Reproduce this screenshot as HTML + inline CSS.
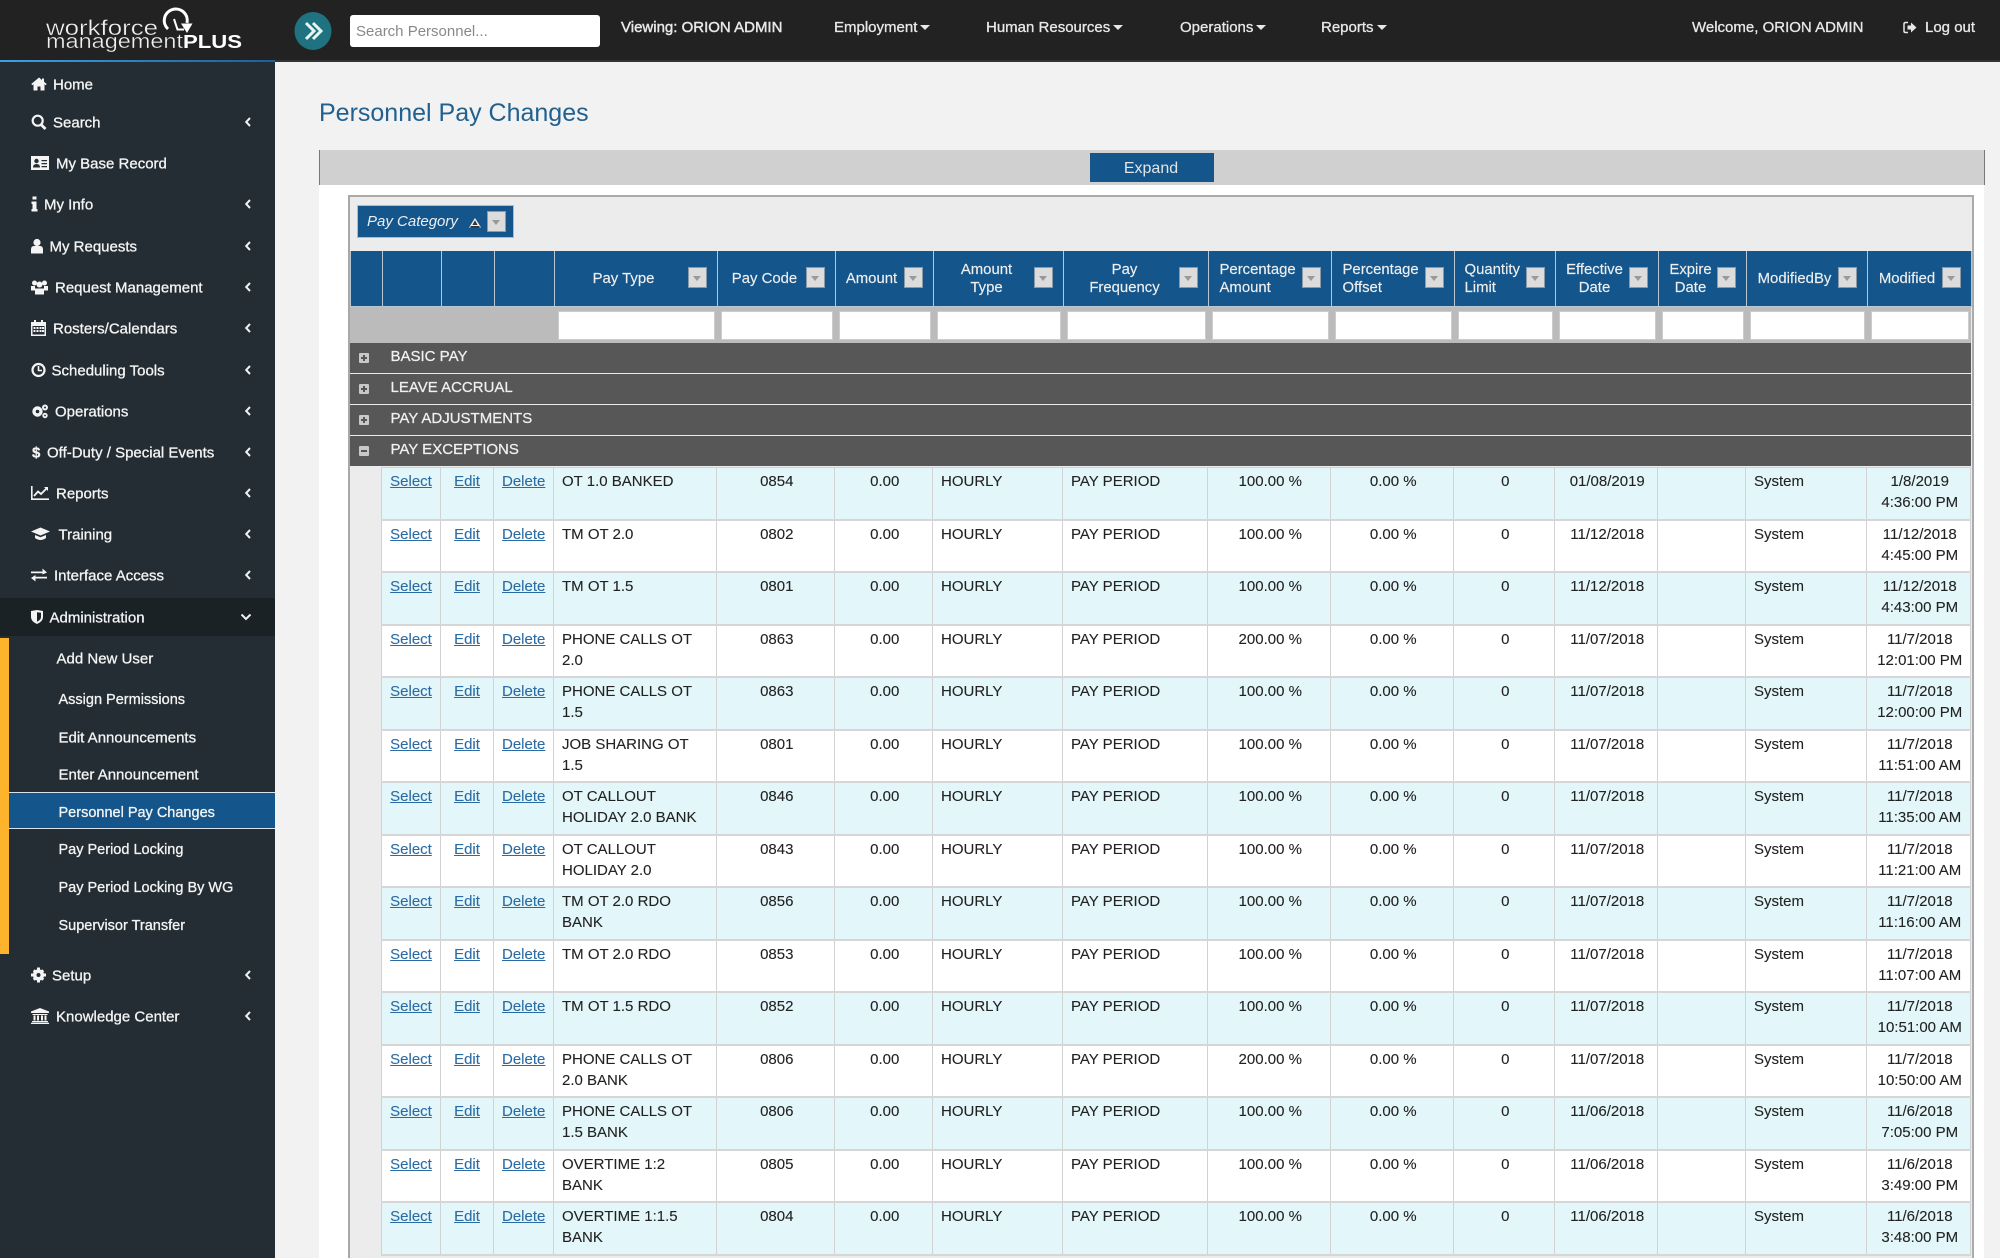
<!DOCTYPE html>
<html lang="en">
<head>
<meta charset="utf-8">
<title>Personnel Pay Changes</title>
<style>
*{box-sizing:border-box}
html{margin:0;padding:0;width:2000px;height:1258px;overflow:hidden;background:#f2f2f2}
body{margin:0;padding:0;width:2000px;height:1258px;overflow:hidden;background:#f2f2f2;font-family:"Liberation Sans",Arial,sans-serif;font-size:15px;color:#222;filter:blur(.35px)}
.abs{position:absolute}
#nav{position:absolute;left:0;top:0;width:2000px;height:62px;background:#222;border-bottom:2px solid #333}
#nav .t{position:absolute;top:18px;line-height:20px;color:#e8e8e8;white-space:nowrap;-webkit-text-stroke:.3px #e8e8e8}
.caret{display:inline-block;width:0;height:0;border-left:5px solid transparent;border-right:5px solid transparent;border-top:5px solid #e8e8e8;margin-left:3px;vertical-align:2px}
#blue{position:absolute;left:0;top:60px;width:275px;height:2px;background:linear-gradient(90deg,#3ba1e6,#1c5f99)}
#side{position:absolute;left:0;top:62px;width:275px;height:1196px;background:#232d33}
.m{position:absolute;left:0;width:275px;height:38px}
.m span{position:absolute;top:50%;transform:translateY(calc(-50% + 1px));color:#f4f4f4;white-space:nowrap;-webkit-text-stroke:.3px #f4f4f4}
.m span.s{font-size:14.5px}
.m svg.i{position:absolute;left:31px;top:50%;transform:translateY(-50%);fill:#f4f4f4}
.m svg.ch{position:absolute;left:244px;top:50%;transform:translateY(-50%);fill:none;stroke:#f0f0f0;stroke-width:2}
#orange{position:absolute;left:0;top:638px;width:9px;height:316px;background:#fdb32b}
#active{position:absolute;left:9px;top:792px;width:266px;height:37px;background:#14568c;border-top:1px solid #d8e2ea;border-bottom:1px solid #d8e2ea}
h3{position:absolute;left:319px;top:96px;margin:0;font-weight:400;font-size:25px;line-height:34px;color:#22608f;white-space:nowrap}
#panel{position:absolute;left:319px;top:150px;width:1665px;height:1108px;background:#fff}
#bar{position:absolute;left:319px;top:150px;width:1666px;height:35px;background:#d0d0d0;border-left:1px solid #777;border-right:1px solid #777}
#expand{position:absolute;left:1090px;top:153px;width:124px;height:29px;background:#14568c;color:#e4e4e4;text-align:center;line-height:31px;font-size:16px;padding-right:2px}
#box{position:absolute;left:348px;top:195px;width:1626px;height:1063px;background:#ececec;border:2px solid #aaa;border-bottom:0;border-left-color:#a8a8a8}
#pc{position:absolute;left:357px;top:205px;width:157px;height:33px;background:#14568c;border:1px solid #a9bccb;color:#eee;font-style:italic;line-height:31px;padding-left:9px;white-space:nowrap}
.fb{position:absolute;width:18.5px;height:21px;background:#dcdcdc;border:1px solid #8b9aa6}
.fb:after{content:"";position:absolute;left:4px;top:8px;border-left:4px solid transparent;border-right:4px solid transparent;border-top:5px solid #999}
table{position:absolute;left:349.5px;width:1621px;table-layout:fixed;border-collapse:collapse}
#head{top:251px;height:91px}
#head th{height:55px;background:#14568c;border:1px solid #b9c7d2;border-top:0;color:#eee;font-weight:400;position:relative;padding:0;font-size:14.9px;line-height:18px;-webkit-text-stroke:.15px #eee}
#head th .l{position:absolute;top:1px;height:54px;display:flex;align-items:center;justify-content:center;text-align:center;white-space:nowrap}
#head th .l.left{justify-content:flex-start;text-align:left}
#head th .fb{top:16px;right:10px}
#head td{height:36px;background:#bbb;padding:4px 2px 3px 4px;border:0}
#head td input{display:block;width:100%;height:29px;border:1px solid #ccc;background:#fff;margin:0;padding:0}
.grp{position:absolute;left:350px;width:1621px;height:30px;background:#575757;color:#f0f0f0;line-height:28px;padding-left:40.5px;white-space:nowrap;-webkit-text-stroke:.25px #f0f0f0}
.pm{position:absolute;left:9px;top:10px;width:9.5px;height:10px;background:#c8c8c8;border-radius:1px}
.pm:before{content:"";position:absolute;left:2px;top:4px;width:5.5px;height:2px;background:#555}
.pm.p:after{content:"";position:absolute;left:3.7px;top:2px;width:2px;height:6px;background:#555}
#data{top:467px}
#data td{border:1px solid #d2d2d2;border-bottom:2px solid #d6d6d6;padding:3px 8px 0;vertical-align:top;line-height:21px;white-space:nowrap;color:#222;font-size:15px;-webkit-text-stroke:.1px #222}
#data tr:nth-child(odd) td{height:53px;background:#e3f7fa}
#data tr:nth-child(even) td{height:52px;background:#fff}
#data tr:first-child td{height:52px}
#data tr td.g{background:#ececec;border:0;border-right:1px solid #d2d2d2}
#data td.c{text-align:center;padding-left:9.5px;padding-right:7px}
#data td.k{text-align:center;padding-left:8px;padding-right:8px}
#data a{color:#2b6ba3;text-decoration:underline;-webkit-text-stroke:.1px #2b6ba3}
</style>
</head>
<body>
<div id="nav">
<svg class="abs" style="left:40px;top:2px" width="210" height="56" viewBox="40 2 210 56">
<text x="46" y="35" fill="#f0f0f0" stroke="#222" stroke-width=".35" paint-order="fill stroke" font-family="Liberation Sans" font-size="21" textLength="112" lengthAdjust="spacingAndGlyphs">workforce</text>
<text x="46" y="48" fill="#f0f0f0" stroke="#222" stroke-width=".35" paint-order="fill stroke" font-family="Liberation Sans" font-size="20" textLength="137" lengthAdjust="spacingAndGlyphs">management</text>
<text x="183" y="48" fill="#fff" font-family="Liberation Sans" font-weight="700" font-size="18" textLength="59" lengthAdjust="spacingAndGlyphs">PLUS</text>
<path d="M168 29A11.5 11.5 0 1 1 187 23" fill="none" stroke="#fff" stroke-width="3"/>
<path d="M181 23.5H192.5L187 33Z" fill="#fff"/>
<path d="M174 19L177.5 29.5H184" fill="none" stroke="#fff" stroke-width="2"/>
</svg>
<svg class="abs" style="left:294px;top:12px" width="38" height="38" viewBox="0 0 38 38"><ellipse cx="19" cy="19" rx="18.5" ry="19" fill="#1f7380"/><path d="M12 11l8 8-8 8M19 11l8 8-8 8" fill="none" stroke="#e8f4f4" stroke-width="3"/></svg>
<div class="abs" style="left:350px;top:15px;width:250px;height:32px;background:#fff;border-radius:3px;color:#888;line-height:34px;padding-left:6px;font-size:15px">Search Personnel...</div>
<div class="t" style="left:621px;-webkit-text-stroke:.45px #e8e8e8">Viewing: ORION ADMIN</div>
<div class="t" style="left:834px">Employment<i class="caret"></i></div>
<div class="t" style="left:986px">Human Resources<i class="caret"></i></div>
<div class="t" style="left:1180px">Operations<i class="caret"></i></div>
<div class="t" style="left:1321px">Reports<i class="caret"></i></div>
<div class="t" style="left:1692px">Welcome, ORION ADMIN</div>
<svg class="abs" style="left:1903px;top:21px" width="14" height="13" viewBox="0 0 14 13"><path d="M5 1.5H2.5Q1 1.5 1 3V10Q1 11.5 2.5 11.5H5" fill="none" stroke="#e8e8e8" stroke-width="1.5"/><path d="M4.5 4.5H8V1.5L13.5 6.5L8 11.5V8.5H4.5Z" fill="#e8e8e8"/></svg>
<div class="t" style="left:1925px">Log out</div>
</div>
<div id="blue"></div>

<div id="side"></div>
<div id="orange"></div>
<div class="abs" style="left:0;top:598px;width:275px;height:38px;background:#1a2226"></div>
<div id="active"></div>

<div class="m" style="top:65px"><svg class="i" width="16" height="14" viewBox="0 0 16 14"><path d="M8 .5L.3 7l1 1.2L2.5 7.2V13.5H6.5V9.5H9.5V13.5H13.5V7.2L14.7 8.2l1-1.2L13 4.7V1.5H11V3Z"/></svg><span style="left:53px">Home</span></div>
<div class="m" style="top:103px"><svg class="i" width="16" height="16" viewBox="0 0 16 16"><circle cx="6.7" cy="6.7" r="5" fill="none" stroke="#f4f4f4" stroke-width="2.2"/><path d="M10 10.5l4.5 4.5" stroke="#f4f4f4" stroke-width="2.8"/></svg><span style="left:53px">Search</span><svg class="ch" width="8" height="12" viewBox="0 0 8 12"><path d="M6 2L2.2 6L6 10"/></svg></div>
<div class="m" style="top:144px"><svg class="i" width="18" height="14" viewBox="0 0 18 14"><path d="M0 0H18V14H0Z"/><circle cx="5.5" cy="5" r="2.2" fill="#232d33"/><path d="M2 11.5Q2 8 5.5 8T9 11.5ZM10.5 4H16V5.3H10.5ZM10.5 7H16V8.3H10.5ZM10.5 10H16V11.3H10.5Z" fill="#232d33"/></svg><span style="left:56px">My Base Record</span></div>
<div class="m" style="top:185px"><svg class="i" width="7" height="15" viewBox="0 0 7 15"><path d="M1.5 0H5.5V3H1.5ZM.5 5H5.5V12.5H6.5V15H.5V12.5H1.5V7.5H.5Z"/></svg><span style="left:44px">My Info</span><svg class="ch" width="8" height="12" viewBox="0 0 8 12"><path d="M6 2L2.2 6L6 10"/></svg></div>
<div class="m" style="top:226.5px"><svg class="i" width="12" height="15" viewBox="0 0 12 15"><circle cx="6" cy="4" r="3.6"/><path d="M0 15V11Q0 7.5 3 7.5H9Q12 7.5 12 11V15Z"/></svg><span style="left:49.5px">My Requests</span><svg class="ch" width="8" height="12" viewBox="0 0 8 12"><path d="M6 2L2.2 6L6 10"/></svg></div>
<div class="m" style="top:268px"><svg class="i" width="17" height="15" viewBox="0 0 17 15"><circle cx="3.5" cy="3.5" r="2.5"/><circle cx="13.5" cy="3.5" r="2.5"/><circle cx="8.5" cy="5" r="3"/><path d="M0 6.5H4V11H0ZM13 6.5H17V11H13ZM4 9H13V15H4Z"/></svg><span style="left:55px">Request Management</span><svg class="ch" width="8" height="12" viewBox="0 0 8 12"><path d="M6 2L2.2 6L6 10"/></svg></div>
<div class="m" style="top:309px"><svg class="i" width="15" height="16" viewBox="0 0 15 16"><path d="M0 2H3V0H5V2H10V0H12V2H15V16H0Z"/><path d="M1.5 6H13.5V14.5H1.5Z" fill="#232d33"/><path d="M2.5 7H4.5V9H2.5ZM5.5 7H7.5V9H5.5ZM8.5 7H10.5V9H8.5ZM11 7H13V9H11ZM2.5 10H4.5V12H2.5ZM5.5 10H7.5V12H5.5ZM8.5 10H10.5V12H8.5ZM11 10H13V12H11Z"/></svg><span style="left:53px">Rosters/Calendars</span><svg class="ch" width="8" height="12" viewBox="0 0 8 12"><path d="M6 2L2.2 6L6 10"/></svg></div>
<div class="m" style="top:350.5px"><svg class="i" width="15" height="15" viewBox="0 0 15 15"><circle cx="7.5" cy="7.5" r="6" fill="none" stroke="#f4f4f4" stroke-width="2.2"/><path d="M7.5 3.5V8H11" fill="none" stroke="#f4f4f4" stroke-width="1.6"/></svg><span style="left:51.5px">Scheduling Tools</span><svg class="ch" width="8" height="12" viewBox="0 0 8 12"><path d="M6 2L2.2 6L6 10"/></svg></div>
<div class="m" style="top:392px"><svg class="i" width="18" height="15" viewBox="0 0 18 15"><circle cx="6.5" cy="8" r="3.5" fill="none" stroke="#f4f4f4" stroke-width="3.4"/><circle cx="14" cy="4" r="2" fill="none" stroke="#f4f4f4" stroke-width="2"/><circle cx="14" cy="12" r="1.8" fill="none" stroke="#f4f4f4" stroke-width="1.8"/></svg><span style="left:55px">Operations</span><svg class="ch" width="8" height="12" viewBox="0 0 8 12"><path d="M6 2L2.2 6L6 10"/></svg></div>
<div class="m" style="top:433px"><span style="left:32px;font-weight:700">$</span><span style="left:47px">Off-Duty / Special Events</span><svg class="ch" width="8" height="12" viewBox="0 0 8 12"><path d="M6 2L2.2 6L6 10"/></svg></div>
<div class="m" style="top:474px"><svg class="i" width="18" height="14" viewBox="0 0 18 14"><path d="M0 0H1.6V12.4H18V14H0Z"/><path d="M3 10L7 5.5L10 8L16 2" fill="none" stroke="#f4f4f4" stroke-width="1.8"/><path d="M13 1H17V5Z"/></svg><span style="left:56px">Reports</span><svg class="ch" width="8" height="12" viewBox="0 0 8 12"><path d="M6 2L2.2 6L6 10"/></svg></div>
<div class="m" style="top:515px"><svg class="i" width="19" height="13" viewBox="0 0 19 13"><path d="M9.5 0L19 4L9.5 8L0 4Z"/><path d="M4 7.5L9.5 9.7L15 7.5V10.5Q9.5 14.5 4 10.5Z"/></svg><span style="left:58.5px">Training</span><svg class="ch" width="8" height="12" viewBox="0 0 8 12"><path d="M6 2L2.2 6L6 10"/></svg></div>
<div class="m" style="top:556px"><svg class="i" width="16" height="13" viewBox="0 0 16 13"><path d="M0 3H11.5V0L16 4L11.5 6V4.8H0ZM16 8.2H4.5V6.5L0 9.5L4.5 13V10H16Z"/></svg><span style="left:54px">Interface Access</span><svg class="ch" width="8" height="12" viewBox="0 0 8 12"><path d="M6 2L2.2 6L6 10"/></svg></div>
<div class="m" style="top:598px"><svg class="i" width="12" height="14" viewBox="0 0 12 14"><path d="M0 1L6 0L12 1V7Q12 11.5 6 14Q0 11.5 0 7Z"/><path d="M6 2.2V11.8Q10 9.8 10 7V2.8Z" fill="#1a2226"/></svg><span style="left:49.5px">Administration</span><svg class="ch" style="left:240px" width="12" height="8" viewBox="0 0 12 8"><path d="M1.5 1.5L6 6L10.5 1.5"/></svg></div>

<div class="m" style="top:639px"><span style="left:56.5px">Add New User</span></div>
<div class="m" style="top:680px"><span class="s" style="left:58.5px">Assign Permissions</span></div>
<div class="m" style="top:718px"><span style="left:58.5px">Edit Announcements</span></div>
<div class="m" style="top:755px"><span style="left:58.5px">Enter Announcement</span></div>
<div class="m" style="top:793px"><span class="s" style="left:58.5px">Personnel Pay Changes</span></div>
<div class="m" style="top:830px"><span class="s" style="left:58.5px">Pay Period Locking</span></div>
<div class="m" style="top:868px"><span class="s" style="left:58.5px">Pay Period Locking By WG</span></div>
<div class="m" style="top:905.5px"><span class="s" style="left:58.5px">Supervisor Transfer</span></div>

<div class="m" style="top:956px"><svg class="i" width="15" height="15" viewBox="0 0 15 15"><circle cx="7.5" cy="7.5" r="3.8" fill="none" stroke="#f4f4f4" stroke-width="3.6"/><path d="M6 0H9V2.5H6ZM6 12.5H9V15H6ZM0 6H2.5V9H0ZM12.5 6H15V9H12.5ZM1.8 3.8L3.8 1.8L5.5 3.5L3.5 5.5ZM11.2 13.2L13.2 11.2L11.5 9.5L9.5 11.5ZM13.2 3.8L11.2 1.8L9.5 3.5L11.5 5.5ZM3.8 13.2L1.8 11.2L3.5 9.5L5.5 11.5Z"/></svg><span style="left:52px">Setup</span><svg class="ch" width="8" height="12" viewBox="0 0 8 12"><path d="M6 2L2.2 6L6 10"/></svg></div>
<div class="m" style="top:997px"><svg class="i" width="18" height="16" viewBox="0 0 18 16"><path d="M9 0L18 3.5V5H0V3.5ZM1.5 6H16.5V7H1.5ZM2.5 7.5H4.5V12.5H2.5ZM6 7.5H8V12.5H6ZM10 7.5H12V12.5H10ZM13.5 7.5H15.5V12.5H13.5ZM1 13H17V14.3H1ZM0 14.7H18V16H0Z"/></svg><span style="left:56px">Knowledge Center</span><svg class="ch" width="8" height="12" viewBox="0 0 8 12"><path d="M6 2L2.2 6L6 10"/></svg></div>

<h3>Personnel Pay Changes</h3>
<div id="panel"></div>
<div id="bar"></div>
<div id="expand">Expand</div>
<div id="box"></div>
<div id="pc">Pay Category</div>
<svg class="abs" style="left:469px;top:218px" width="12" height="10" viewBox="0 0 12 10"><path d="M6 0L12 9.5H0Z" fill="#f4f4f4"/><path d="M6 2.2L8.6 7H3.4Z" fill="#333"/><path d="M1.5 8H10.5V9.5H1.5Z" fill="#333"/></svg>
<div class="fb" style="left:487px;top:211px"></div>

<table id="head">
<colgroup><col style="width:32px"><col style="width:59px"><col style="width:53px"><col style="width:60px"><col style="width:163px"><col style="width:118px"><col style="width:98px"><col style="width:130px"><col style="width:145px"><col style="width:123px"><col style="width:123px"><col style="width:101px"><col style="width:103px"><col style="width:88px"><col style="width:121px"><col style="width:104px"></colgroup>
<tr>
<th></th><th></th><th></th><th></th>
<th><div class="l" style="left:0;width:138px">Pay Type</div><div class="fb"></div></th>
<th><div class="l" style="left:0;width:94px">Pay Code</div><div class="fb"></div></th>
<th><div class="l" style="left:0;width:72px">Amount</div><div class="fb"></div></th>
<th><div class="l" style="left:0;width:106px">Amount<br>Type</div><div class="fb"></div></th>
<th><div class="l" style="left:0;width:122px">Pay<br>Frequency</div><div class="fb"></div></th>
<th><div class="l left" style="left:11px">Percentage<br>Amount</div><div class="fb"></div></th>
<th><div class="l left" style="left:11px">Percentage<br>Offset</div><div class="fb"></div></th>
<th><div class="l left" style="left:10px">Quantity<br>Limit</div><div class="fb"></div></th>
<th><div class="l" style="left:0;width:78px">Effective<br>Date</div><div class="fb"></div></th>
<th><div class="l" style="left:0;width:64px">Expire<br>Date</div><div class="fb"></div></th>
<th><div class="l" style="left:0;width:96px">ModifiedBy</div><div class="fb"></div></th>
<th><div class="l" style="left:0;width:79px">Modified</div><div class="fb"></div></th>
</tr>
<tr>
<td></td><td></td><td></td><td></td>
<td><input></td><td><input></td><td><input></td><td><input></td><td><input></td><td><input></td><td><input></td><td><input></td><td><input></td><td><input></td><td><input></td><td><input></td>
</tr>
</table>

<div class="grp" style="top:342.5px"><i class="pm p"></i>BASIC PAY</div>
<div class="grp" style="top:373.7px"><i class="pm p"></i>LEAVE ACCRUAL</div>
<div class="grp" style="top:405px"><i class="pm p"></i>PAY ADJUSTMENTS</div>
<div class="grp" style="top:436.2px"><i class="pm"></i>PAY EXCEPTIONS</div>

<table id="data">
<colgroup><col style="width:32px"><col style="width:59px"><col style="width:53px"><col style="width:60px"><col style="width:163px"><col style="width:118px"><col style="width:98px"><col style="width:130px"><col style="width:145px"><col style="width:123px"><col style="width:123px"><col style="width:101px"><col style="width:103px"><col style="width:88px"><col style="width:121px"><col style="width:104px"></colgroup>
<tr><td class="g"></td><td class="k"><a>Select</a></td><td class="k"><a>Edit</a></td><td class="k"><a>Delete</a></td><td>OT 1.0 BANKED</td><td class="c">0854</td><td class="c">0.00</td><td>HOURLY</td><td>PAY PERIOD</td><td class="c">100.00 %</td><td class="c">0.00 %</td><td class="c">0</td><td class="c">01/08/2019</td><td></td><td>System</td><td class="c">1/8/2019<br>4:36:00 PM</td></tr>
<tr><td class="g"></td><td class="k"><a>Select</a></td><td class="k"><a>Edit</a></td><td class="k"><a>Delete</a></td><td>TM OT 2.0</td><td class="c">0802</td><td class="c">0.00</td><td>HOURLY</td><td>PAY PERIOD</td><td class="c">100.00 %</td><td class="c">0.00 %</td><td class="c">0</td><td class="c">11/12/2018</td><td></td><td>System</td><td class="c">11/12/2018<br>4:45:00 PM</td></tr>
<tr><td class="g"></td><td class="k"><a>Select</a></td><td class="k"><a>Edit</a></td><td class="k"><a>Delete</a></td><td>TM OT 1.5</td><td class="c">0801</td><td class="c">0.00</td><td>HOURLY</td><td>PAY PERIOD</td><td class="c">100.00 %</td><td class="c">0.00 %</td><td class="c">0</td><td class="c">11/12/2018</td><td></td><td>System</td><td class="c">11/12/2018<br>4:43:00 PM</td></tr>
<tr><td class="g"></td><td class="k"><a>Select</a></td><td class="k"><a>Edit</a></td><td class="k"><a>Delete</a></td><td>PHONE CALLS OT<br>2.0</td><td class="c">0863</td><td class="c">0.00</td><td>HOURLY</td><td>PAY PERIOD</td><td class="c">200.00 %</td><td class="c">0.00 %</td><td class="c">0</td><td class="c">11/07/2018</td><td></td><td>System</td><td class="c">11/7/2018<br>12:01:00 PM</td></tr>
<tr><td class="g"></td><td class="k"><a>Select</a></td><td class="k"><a>Edit</a></td><td class="k"><a>Delete</a></td><td>PHONE CALLS OT<br>1.5</td><td class="c">0863</td><td class="c">0.00</td><td>HOURLY</td><td>PAY PERIOD</td><td class="c">100.00 %</td><td class="c">0.00 %</td><td class="c">0</td><td class="c">11/07/2018</td><td></td><td>System</td><td class="c">11/7/2018<br>12:00:00 PM</td></tr>
<tr><td class="g"></td><td class="k"><a>Select</a></td><td class="k"><a>Edit</a></td><td class="k"><a>Delete</a></td><td>JOB SHARING OT<br>1.5</td><td class="c">0801</td><td class="c">0.00</td><td>HOURLY</td><td>PAY PERIOD</td><td class="c">100.00 %</td><td class="c">0.00 %</td><td class="c">0</td><td class="c">11/07/2018</td><td></td><td>System</td><td class="c">11/7/2018<br>11:51:00 AM</td></tr>
<tr><td class="g"></td><td class="k"><a>Select</a></td><td class="k"><a>Edit</a></td><td class="k"><a>Delete</a></td><td>OT CALLOUT<br>HOLIDAY 2.0 BANK</td><td class="c">0846</td><td class="c">0.00</td><td>HOURLY</td><td>PAY PERIOD</td><td class="c">100.00 %</td><td class="c">0.00 %</td><td class="c">0</td><td class="c">11/07/2018</td><td></td><td>System</td><td class="c">11/7/2018<br>11:35:00 AM</td></tr>
<tr><td class="g"></td><td class="k"><a>Select</a></td><td class="k"><a>Edit</a></td><td class="k"><a>Delete</a></td><td>OT CALLOUT<br>HOLIDAY 2.0</td><td class="c">0843</td><td class="c">0.00</td><td>HOURLY</td><td>PAY PERIOD</td><td class="c">100.00 %</td><td class="c">0.00 %</td><td class="c">0</td><td class="c">11/07/2018</td><td></td><td>System</td><td class="c">11/7/2018<br>11:21:00 AM</td></tr>
<tr><td class="g"></td><td class="k"><a>Select</a></td><td class="k"><a>Edit</a></td><td class="k"><a>Delete</a></td><td>TM OT 2.0 RDO<br>BANK</td><td class="c">0856</td><td class="c">0.00</td><td>HOURLY</td><td>PAY PERIOD</td><td class="c">100.00 %</td><td class="c">0.00 %</td><td class="c">0</td><td class="c">11/07/2018</td><td></td><td>System</td><td class="c">11/7/2018<br>11:16:00 AM</td></tr>
<tr><td class="g"></td><td class="k"><a>Select</a></td><td class="k"><a>Edit</a></td><td class="k"><a>Delete</a></td><td>TM OT 2.0 RDO</td><td class="c">0853</td><td class="c">0.00</td><td>HOURLY</td><td>PAY PERIOD</td><td class="c">100.00 %</td><td class="c">0.00 %</td><td class="c">0</td><td class="c">11/07/2018</td><td></td><td>System</td><td class="c">11/7/2018<br>11:07:00 AM</td></tr>
<tr><td class="g"></td><td class="k"><a>Select</a></td><td class="k"><a>Edit</a></td><td class="k"><a>Delete</a></td><td>TM OT 1.5 RDO</td><td class="c">0852</td><td class="c">0.00</td><td>HOURLY</td><td>PAY PERIOD</td><td class="c">100.00 %</td><td class="c">0.00 %</td><td class="c">0</td><td class="c">11/07/2018</td><td></td><td>System</td><td class="c">11/7/2018<br>10:51:00 AM</td></tr>
<tr><td class="g"></td><td class="k"><a>Select</a></td><td class="k"><a>Edit</a></td><td class="k"><a>Delete</a></td><td>PHONE CALLS OT<br>2.0 BANK</td><td class="c">0806</td><td class="c">0.00</td><td>HOURLY</td><td>PAY PERIOD</td><td class="c">200.00 %</td><td class="c">0.00 %</td><td class="c">0</td><td class="c">11/07/2018</td><td></td><td>System</td><td class="c">11/7/2018<br>10:50:00 AM</td></tr>
<tr><td class="g"></td><td class="k"><a>Select</a></td><td class="k"><a>Edit</a></td><td class="k"><a>Delete</a></td><td>PHONE CALLS OT<br>1.5 BANK</td><td class="c">0806</td><td class="c">0.00</td><td>HOURLY</td><td>PAY PERIOD</td><td class="c">100.00 %</td><td class="c">0.00 %</td><td class="c">0</td><td class="c">11/06/2018</td><td></td><td>System</td><td class="c">11/6/2018<br>7:05:00 PM</td></tr>
<tr><td class="g"></td><td class="k"><a>Select</a></td><td class="k"><a>Edit</a></td><td class="k"><a>Delete</a></td><td>OVERTIME 1:2<br>BANK</td><td class="c">0805</td><td class="c">0.00</td><td>HOURLY</td><td>PAY PERIOD</td><td class="c">100.00 %</td><td class="c">0.00 %</td><td class="c">0</td><td class="c">11/06/2018</td><td></td><td>System</td><td class="c">11/6/2018<br>3:49:00 PM</td></tr>
<tr><td class="g"></td><td class="k"><a>Select</a></td><td class="k"><a>Edit</a></td><td class="k"><a>Delete</a></td><td>OVERTIME 1:1.5<br>BANK</td><td class="c">0804</td><td class="c">0.00</td><td>HOURLY</td><td>PAY PERIOD</td><td class="c">100.00 %</td><td class="c">0.00 %</td><td class="c">0</td><td class="c">11/06/2018</td><td></td><td>System</td><td class="c">11/6/2018<br>3:48:00 PM</td></tr>
</table>
</body>
</html>
